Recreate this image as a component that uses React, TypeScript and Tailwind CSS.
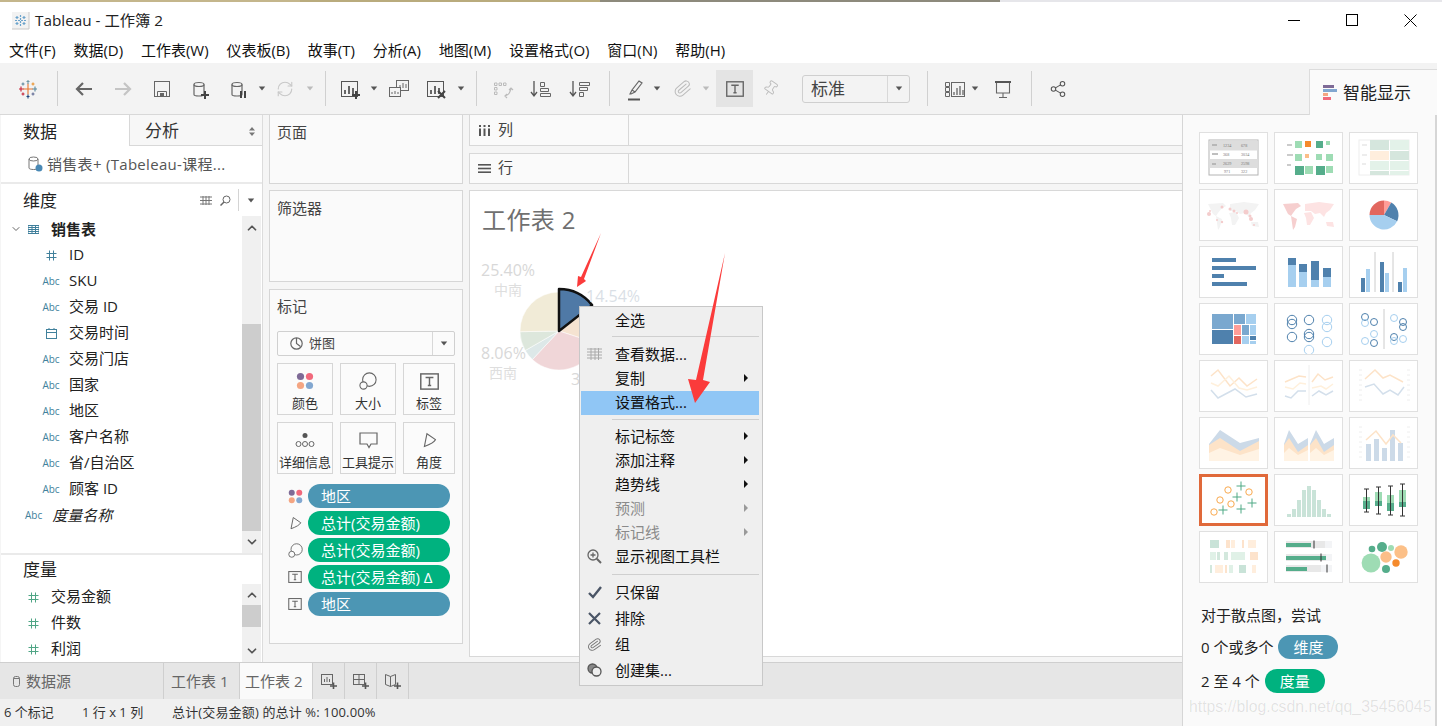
import type { ReactNode } from "react";
import { ChevronDown, ChevronUp, Paperclip, Pin, RefreshCw, Share2 } from "lucide-react";

const BLUE = "#4f81ad";
const SKY = "#a6cfef";
const DARKG = "#55ad8b";
const LIGHTG = "#9edcb4";

// angles run clockwise from 12 o'clock
const wedge = (cx: number, cy: number, r: number, a: number, b: number) => {
  const p = (d: number) => {
    const t = ((d - 90) * Math.PI) / 180;
    return (cx + r * Math.cos(t)).toFixed(2) + " " + (cy + r * Math.sin(t)).toFixed(2);
  };
  return "M" + cx + " " + cy + " L" + p(a) + " A" + r + " " + r + " 0 " + (b - a > 180 ? 1 : 0) + " 1 " + p(b) + " Z";
};

const Cell = ({ children, className = "" }: { children: ReactNode; className?: string }) => (
  <svg width="28" height="28" viewBox="0 0 28 28" fill="none" className={"shrink-0 " + className}>
    {children}
  </svg>
);

const Caret = ({ className = "", color = "#555" }: { className?: string; color?: string }) => (
  <svg width="8" height="5" viewBox="-1 -0.5 10 6" className={"shrink-0 " + className}>
    <path d="M0 0h8L4 5z" fill={color} />
  </svg>
);

const Sep = ({ className }: { className: string }) => <div className={"h-[35px] w-px shrink-0 bg-[#d0d0d0] " + className} />;

const Cyl = ({ x, color = "#666" }: { x: number; color?: string }) => (
  <g stroke={color} strokeWidth="1.2">
    <path d={"M" + x + " 9.5v10c0 2 10 2 10 0v-10"} />
    <ellipse cx={x + 5} cy="9.5" rx="5" ry="2" />
  </g>
);

const Plus = ({ x, y, s = 4 }: { x: number; y: number; s?: number }) => (
  <path d={"M" + (x - s) + " " + y + "h" + s * 2 + "M" + x + " " + (y - s) + "v" + s * 2} stroke="#444" strokeWidth="2" />
);

const TableauLogo = () => (
  <Cell>
    <g strokeWidth="1.1">
      <path d="M14 8.5v11M9 14h10" stroke="#e8762c" />
      <path d="M7 11.5v5M5 14h4.5" stroke="#c72035" />
      <path d="M21 11.5v5M18.5 14h4.5" stroke="#59879b" />
      <path d="M14 5v4M12.5 6.5h3" stroke="#7099a6" />
      <path d="M14 19.5v4M12.5 21.5h3" stroke="#1f457e" />
      <path d="M9 7.5v3M7.5 9h3" stroke="#5b879b" />
      <path d="M19 7.5v3M17.5 9h3" stroke="#eb9129" />
      <path d="M9 17.5v3M7.5 19h3" stroke="#c72035" />
      <path d="M19 17.5v3M17.5 19h3" stroke="#5b6591" />
    </g>
  </Cell>
);

const TitleIcon = () => (
  <svg width="19" height="19" viewBox="0 0 19 19" className="shrink-0">
    <rect x="1" y="1" width="17" height="17" fill="#f2f2f2" />
    <path d="M1 18h17V1" stroke="#c8c8c8" fill="none" />
    <g stroke="#6ba3cc" strokeWidth="1.2">
      <path d="M9.5 4v11M4 9.5h11" strokeDasharray="2 1" />
      <path d="M6 5v3M4.5 6.5h3M13 5v3M11.5 6.5h3M6 11v3M4.5 12.5h3M13 11v3M11.5 12.5h3" />
    </g>
  </svg>
);

const BarsInBox = ({ x = 5 }: { x?: number }) => (
  <g>
    <rect x={x + 0.5} y="6.5" width="16" height="15" stroke="#555" />
    <path d={"M" + (x + 4) + " 19v-4M" + (x + 8) + " 19v-8M" + (x + 12) + " 19v-6"} stroke="#666" strokeWidth="2" />
  </g>
);

const TBox = ({ size = 17 }: { size?: number }) => (
  <svg width={size} height={size - 2} viewBox="0 0 17 15" className="shrink-0">
    <rect x="0.7" y="0.7" width="15.6" height="13.6" fill="none" stroke="#666" strokeWidth="1.3" />
    <path d="M5 4h7M8.5 4v7M7 11h3" stroke="#666" strokeWidth="1.3" fill="none" />
  </svg>
);

const Dots = ({ size = 20 }: { size?: number }) => (
  <svg width={size} height={size} viewBox="0 0 20 20" className="shrink-0">
    <circle cx="5" cy="5" r="4" fill="#7e6a96" />
    <circle cx="15" cy="5" r="4" fill="#f1697c" />
    <circle cx="5" cy="15" r="4" fill="#f4a582" />
    <circle cx="15" cy="15" r="4" fill="#82a7d0" />
  </svg>
);

const SizeIc = ({ size = 20 }: { size?: number }) => (
  <svg width={size} height={size} viewBox="0 0 20 20" fill="none" stroke="#666" strokeWidth="1.2" className="shrink-0">
    <circle cx="11.5" cy="8.5" r="7.5" fill="#fbfbfb" />
    <circle cx="5" cy="15" r="4" fill="#fbfbfb" />
  </svg>
);

const AngleIc = ({ size = 20 }: { size?: number }) => (
  <svg width={size} height={size} viewBox="0 0 20 20" fill="none" stroke="#666" strokeWidth="1.3" className="shrink-0">
    <path d="M7 2 L17 9 Q15 13 4 17 Z" />
  </svg>
);

const Hash = ({ color }: { color: string }) => (
  <svg width="11" height="11" viewBox="0 0 11 11" stroke={color} strokeWidth="1" className="shrink-0">
    <path d="M3.5 0.5v10M7.5 0.5v10M0.5 3.5h10M0.5 7.5h10" />
  </svg>
);

const Abc = () => <span className="text-[10px] leading-none text-[#41819c]">Abc</span>;

const Field = ({ name, kind = "abc" }: { name: string; kind?: "abc" | "num" | "date" }) => (
  <div className="flex h-[26px] items-center">
    <div className="ml-[42px] flex w-[16px] shrink-0 justify-center">
      {kind === "abc" && <Abc />}
      {kind === "num" && <Hash color="#41819c" />}
      {kind === "date" && (
        <svg width="11" height="11" viewBox="0 0 11 11" fill="none" stroke="#41819c">
          <rect x="0.5" y="1.5" width="10" height="9" />
          <path d="M0.5 4.5h10M3 0v2M8 0v2" />
        </svg>
      )}
    </div>
    <span className="ml-[10px] pb-[2px] text-[15px] text-[#222]">{name}</span>
  </div>
);

const Measure = ({ name }: { name: string }) => (
  <div className="flex h-[26px] items-center pl-[27px]">
    <Hash color="#4fa585" />
    <span className="ml-[12px] pb-[2px] text-[15px] text-[#222]">{name}</span>
  </div>
);

const ScrollBtn = ({ up, className }: { up?: boolean; className: string }) => (
  <div className={"flex items-center justify-center bg-[#f0f0f0] " + className}>
    {up ? <ChevronUp size={14} strokeWidth={3} color="#555" /> : <ChevronDown size={14} strokeWidth={3} color="#555" />}
  </div>
);

const Shelf = ({ icon, label }: { icon: ReactNode; label: string }) => (
  <div className="flex h-[31px] border-y border-l border-[#d8d8d8] bg-[#fafafa] first:border-t-0">
    <div className="flex w-[159px] items-center border-r border-[#d8d8d8] pl-[8px]">
      {icon}
      <span className="ml-[7px] pb-[2px] text-[15px] text-[#444]">{label}</span>
    </div>
  </div>
);

const MarkBtn = ({ icon, label }: { icon: ReactNode; label: string }) => (
  <div className="flex h-[52px] flex-col items-center border border-[#d6d6d6] bg-[#fbfbfb] pt-[6px]">
    <div className="flex h-[22px] items-center">{icon}</div>
    <span className="mt-[1px] whitespace-nowrap text-[13px] leading-[20px] text-[#333]">{label}</span>
  </div>
);

const Pill = ({ icon, label, green }: { icon: ReactNode; label: string; green?: boolean }) => (
  <div className="flex h-[24px] items-center">
    <div className="flex w-[31px] shrink-0 justify-center pl-[5px]">{icon}</div>
    <div className={"flex h-[24px] w-[142px] items-center whitespace-pre rounded-full pl-[13px] text-[15px] text-white " + (green ? "bg-[#00b27f]" : "bg-[#4c96b4]")}>{label}</div>
  </div>
);

const thumbs: ReactNode[] = [
  <g key="text">
    <rect x="10" y="8" width="49" height="35" fill="#fff" stroke="#b4b4b4" />
    <rect x="10.5" y="8.5" width="48" height="10" fill="#ddd" />
    <rect x="10.5" y="27" width="48" height="9" fill="#ddd" />
    <path d="M13 13h5M13 22h6M13 32h4" stroke="#aaa" strokeWidth="1.5" />
    <g fontSize="4.2" fill="#777" fontFamily="Liberation Serif, serif">
      <text x="24" y="15">1234</text><text x="42" y="15">678</text>
      <text x="24" y="24">368</text><text x="42" y="24">3034</text>
      <text x="24" y="33">2629</text><text x="42" y="33">2598</text>
      <text x="25" y="41">971</text><text x="42" y="41">322</text>
    </g>
  </g>,
  <g key="heat">
    <path d="M13 13h5M13 23h6M13 33h4" stroke="#bbb" strokeWidth="1.5" />
    {[[21, 9, 7, LIGHTG], [31, 9, 6, "#f58a2c"], [42, 9, 7, DARKG], [52, 9, 4, LIGHTG], [21, 22, 7, LIGHTG], [31, 22, 4, "#fbbe88"], [42, 22, 6, LIGHTG], [52, 22, 7, LIGHTG], [21, 34, 9, DARKG], [31, 34, 8, LIGHTG], [42, 34, 9, DARKG], [52, 34, 7, LIGHTG]].map(([x, y, s, c], i) => (
      <rect key={i} x={x as number} y={y as number} width={s as number} height={s as number} fill={c as string} />
    ))}
  </g>,
  <g key="hilite">
    <rect x="10" y="8" width="50" height="35" fill="#fff" stroke="#eee" />
    {[[21, 8, 19, 10, "#d5e6dd"], [41, 8, 19, 10, "#e3f2e9"], [21, 19, 19, 9, "#ffeedd"], [41, 19, 19, 9, "#d5e6dd"], [21, 29, 19, 9, "#e3f2e9"], [41, 29, 19, 9, "#e3f2e9"], [21, 39, 19, 4, "#d5e6dd"], [41, 39, 19, 4, "#e3f2e9"]].map(([x, y, w, h, c], i) => (
      <rect key={i} x={x as number} y={y as number} width={w as number} height={h as number} fill={c as string} />
    ))}
    <path d="M13 13h5M13 23h5M13 32h4" stroke="#e8e8e8" strokeWidth="1.5" />
  </g>,
  <g key="symbol">
    <path d="M9 15L24 14 27 17 22 20 19 24 17 27 14 25 11 19ZM17 27L23 30 21 38 19 41 18 34ZM30 24L37 23 40 29 36 36 33 36 32 29ZM31 15L45 13 60 15 56 21 52 24 50 28 46 24 41 25 37 22 31 22ZM52 33L59 33 60 38 53 37Z" fill="#f3f3f3" />
    {[[10, 25, 2], [11, 22, 1], [18, 31, 1], [23, 33, 1.2], [23, 18, 1.5], [31, 20, 1.5], [35, 22, 1.5], [38, 24, 1], [47, 23, 2.5], [51, 27, 1.5], [52, 30, 2], [55, 36, 1]].map(([x, y, r], i) => (
      <circle key={i} cx={x} cy={y} r={r} fill="#f4cccc" />
    ))}
  </g>,
  <g key="filled">
    <path d="M9 15L24 14 27 17 22 20 19 24 17 27 14 25 11 19ZM17 27L23 30 21 38 19 41 18 34Z" fill="#f6cfcf" />
    <path d="M30 24L37 23 40 29 36 36 33 36 32 29ZM31 15L45 13 60 15 56 21 52 24 50 28 46 24 41 25 37 22 31 22ZM52 33L59 33 60 38 53 37Z" fill="#fde3e3" />
  </g>,
  <g key="pie">
    <path d={wedge(35, 26, 14.5, 0, 30)} fill="#ff9d98" />
    <path d={wedge(35, 26, 14.5, 30, 115)} fill={BLUE} />
    <path d={wedge(35, 26, 14.5, 115, 270)} fill={SKY} />
    <path d={wedge(35, 26, 14.5, 270, 360)} fill="#e2675f" />
  </g>,
  <g key="hbar" fill={BLUE}>
    <rect x="13" y="12" width="24" height="4" />
    <rect x="13" y="20" width="44" height="4" />
    <rect x="13" y="28" width="12" height="4" />
    <rect x="13" y="36" width="35" height="4" />
  </g>,
  <g key="stack">
    {[[14, 12, 19], [25, 18, 26], [37, 15, 34], [49, 22, 31]].map(([x, a, b], i) => (
      <g key={i}>
        <rect x={x} y={a} width="8" height={b - a} fill={BLUE} />
        <rect x={x} y={b} width="8" height={41 - b} fill={SKY} />
      </g>
    ))}
  </g>,
  <g key="side">
    <path d="M26 6v40M44 6v40" stroke="#ccc" />
    {[[12, 32, BLUE], [17, 23, SKY], [31, 16, BLUE], [36, 27, SKY], [49, 36, BLUE], [54, 22, SKY]].map(([x, y, c], i) => (
      <rect key={i} x={x as number} y={y as number} width="4" height={46 - (y as number)} fill={c as string} />
    ))}
  </g>,
  <g key="tree">
    {[[13, 11, 21, 15, "#7aa8cf"], [13, 27, 21, 14, BLUE], [35, 11, 11, 10, "#7aa8cf"], [47, 11, 10, 10, SKY], [35, 22, 7, 10, "#ff9d98"], [43, 22, 7, 10, "#7aa8cf"], [51, 22, 6, 10, SKY], [35, 33, 7, 8, "#e2675f"], [43, 33, 7, 8, SKY], [51, 33, 6, 4, BLUE], [51, 38, 6, 3, SKY]].map(([x, y, w, h, c], i) => (
      <rect key={i} x={x as number} y={y as number} width={w as number} height={h as number} fill={c as string} />
    ))}
  </g>,
  <g key="circles" fill="none" strokeWidth="1">
    {[[18, 17, BLUE], [18, 21, BLUE], [18, 34, BLUE], [35, 17, BLUE], [35, 31, BLUE], [35, 34, BLUE], [35, 47, SKY], [53, 17, SKY], [53, 24, SKY], [53, 39, SKY]].map(([x, y, c], i) => (
      <circle key={i} cx={x} cy={y} r="4.7" stroke={c as string} />
    ))}
  </g>,
  <g key="sidecircles" fill="none" strokeWidth="1">
    <path d="M35 6v40" stroke="#ccc" />
    {[[16, 14, BLUE], [16, 20, SKY], [25, 19, BLUE], [25, 31, SKY], [16, 38, SKY], [25, 40, BLUE], [45, 15, SKY], [54, 19, BLUE], [54, 24, BLUE], [45, 34, BLUE], [45, 38, SKY], [54, 36, SKY]].map(([x, y, c], i) => (
      <circle key={i} cx={x} cy={y} r="3.5" stroke={c as string} />
    ))}
  </g>,
  <g key="lines" fill="none">
    <polyline points="12,16 19,10 31,26 40,18 48,26 58,19" stroke="#fde3c8" strokeWidth="1.5" />
    <polyline points="12,23 19,26 30,16 40,28 48,30 58,27" stroke="#fff0dc" strokeWidth="1.5" />
    <polyline points="12,30 19,38 36,29 47,37 58,34" stroke="#d3dfeb" strokeWidth="1.5" />
  </g>,
  <g key="lines2" fill="none" strokeWidth="1.5">
    <path d="M35 5v40" stroke="#eee" strokeWidth="1" />
    <polyline points="11,22 25,16 32,17" stroke="#fde3c8" />
    <polyline points="11,27 19,29 26,23 32,24" stroke="#fff0dc" />
    <polyline points="11,36 17,38 24,31 32,31" stroke="#d3dfeb" />
    <polyline points="38,22 44,14 51,20 59,17" stroke="#fde3c8" />
    <polyline points="38,28 47,26 52,29 59,24" stroke="#fff0dc" />
    <polyline points="38,36 45,31 52,35 59,31" stroke="#d3dfeb" />
  </g>,
  <g key="dual" fill="none" strokeWidth="1.5">
    <path d="M10 10h3M10 15h3M10 20h3M10 25h3M10 30h3M10 35h3M10 40h3M58 10h3M58 15h3M58 20h3M58 25h3M58 30h3M58 35h3M58 40h3" stroke="#eee" strokeWidth="1" />
    <polyline points="16,19 26,10 34,18 41,15 54,22" stroke="#fde3c8" />
    <polyline points="16,27 25,24 34,34 41,30 49,35 55,27" stroke="#d3dfeb" />
  </g>,
  <g key="area">
    <polygon points="10,27 21,13 41,26 60,21 60,44 10,44" fill="#ccdae8" />
    <polygon points="10,28 21,21 41,34 60,24 60,44 10,44" fill="#fde3c8" />
    <polygon points="10,36 21,31 41,38 60,32 60,44 10,44" fill="#fff3e4" />
  </g>,
  <g key="area2">
    <polygon points="10,27 15,13 24,27 34,21 34,44 10,44" fill="#ccdae8" />
    <polygon points="10,28 15,21 24,35 34,28 34,44 10,44" fill="#fde3c8" />
    <polygon points="10,36 15,31 24,38 34,33 34,44 10,44" fill="#fff3e4" />
    <polygon points="36,27 42,13 50,27 60,21 60,44 36,44" fill="#ccdae8" />
    <polygon points="36,28 42,21 50,35 60,28 60,44 36,44" fill="#fde3c8" />
    <polygon points="36,36 42,31 50,38 60,33 60,44 36,44" fill="#fff3e4" />
  </g>,
  <g key="combo">
    <path d="M10 10h3M10 15h3M10 20h3M10 25h3M10 30h3M10 35h3M10 40h3M58 10h3M58 15h3M58 20h3M58 25h3M58 30h3M58 35h3M58 40h3" stroke="#eee" />
    {[[17, 27], [25, 22], [33, 31], [41, 13], [49, 26]].map(([x, y], i) => (
      <rect key={i} x={x} y={y} width="5" height={44 - y} fill="#ccdae8" />
    ))}
    <polyline points="17,23 27,14 37,27 44,18 52,26" fill="none" stroke="#fde3c8" strokeWidth="1.5" />
  </g>,
  <g key="scatter" fill="none" strokeWidth="1">
    {[[29, 16], [50, 18], [21, 26], [32, 30], [15, 38]].map(([x, y], i) => (
      <circle key={i} cx={x} cy={y} r="3.2" stroke="#f9a94f" />
    ))}
    {[[42, 12], [38, 23], [53, 29], [24, 36], [42, 35]].map(([x, y], i) => (
      <path key={i} d={"M" + (x - 4.5) + " " + y + "h9M" + x + " " + (y - 4.5) + "v9"} stroke="#4fa985" />
    ))}
  </g>,
  <g key="hist" fill="#c9e3d8">
    {[[13, 40], [18, 35], [23, 26], [28, 16], [33, 12], [38, 16], [43, 26], [48, 35], [53, 40]].map(([x, y], i) => (
      <rect key={i} x={x} y={y} width="4" height={43 - y} />
    ))}
  </g>,
  <g key="box">
    {[[14, 15, 38, 23, 27, 35], [26, 13, 40, 18, 27, 32], [38, 12, 41, 21, 29, 37], [50, 10, 42, 16, 28, 33]].map(([x, t, b, y1, y2, y3], i) => (
      <g key={i}>
        <rect x={x} y={y1} width="7" height={y2 - y1} fill={LIGHTG} />
        <rect x={x} y={y2} width="7" height={y3 - y2} fill={DARKG} />
        <path d={"M" + (x + 3.5) + " " + t + "V" + b + "M" + (x + 1) + " " + t + "h5M" + (x + 1) + " " + b + "h5"} stroke="#333" fill="none" />
      </g>
    ))}
  </g>,
  <g key="gantt">
    {[[11, 9, 9, "#c9e3d8"], [27, 9, 4, "#fde3cc"], [32, 9, 4, "#ffeedd"], [43, 9, 2, "#fde3cc"], [49, 9, 8, "#ffeedd"], [11, 21, 6, "#e0f1e7"], [18, 21, 3, "#d3e8dd"], [25, 21, 4, "#d3e8dd"], [32, 21, 14, "#e0f1e7"], [51, 21, 8, "#fde3cc"], [11, 34, 2, "#d3e8dd"], [16, 34, 8, "#ffeedd"], [26, 34, 2, "#fde3cc"], [30, 34, 4, "#e0f1e7"], [40, 34, 7, "#c9e3d8"], [53, 34, 4, "#ffeedd"]].map(([x, y, w, c], i) => (
      <rect key={i} x={x as number} y={y as number} width={w as number} height="8" fill={c as string} />
    ))}
  </g>,
  <g key="bullet">
    {[[10, 25, 37, 40], [23, 26, 52, 47], [34, 21, 33, 53]].map(([y, w, g, t], i) => (
      <g key={i}>
        <rect x="12" y={y} width="46" height="7" fill="#f3f4f6" />
        <rect x="12" y={y} width={w + 14} height="7" fill="#e8e8e8" />
        <rect x="12" y={y + 2} width={g - 12} height="4" fill={DARKG} />
        <path d={"M" + t + " " + (y - 0.5) + "v8"} stroke="#333" />
      </g>
    ))}
  </g>,
  <g key="bubble">
    <circle cx="22" cy="32" r="9.4" fill={LIGHTG} />
    <circle cx="37" cy="26" r="5.7" fill="#fbbe88" />
    <circle cx="52" cy="21" r="6.7" fill="#fcc088" />
    <circle cx="47" cy="32" r="3.7" fill="#f58a2c" />
    <circle cx="37" cy="38" r="4" fill={DARKG} />
    <circle cx="33" cy="16" r="5" fill={DARKG} />
    <circle cx="23" cy="18" r="3.3" fill={DARKG} />
    <circle cx="42" cy="17" r="3" fill={LIGHTG} />
  </g>,
];

const SELECTED = 18;

type MenuRow = { label?: string; h?: string; arrow?: boolean; off?: boolean; active?: boolean; icon?: ReactNode; sep?: string };

const menuRows: MenuRow[] = [
  { label: "全选", h: "h-[26px]" },
  { sep: "mt-[2px] mb-[6px]" },
  {
    label: "查看数据...",
    h: "h-[24px]",
    icon: (
      <svg width="15" height="12" viewBox="0 0 15 12" stroke="#aaa">
        <path d="M0 1h15M0 4h15M0 7h15M0 10h15M4 0v12M8 0v12M11.5 0v12" />
      </svg>
    ),
  },
  { label: "复制", h: "h-[24px]", arrow: true },
  { label: "设置格式...", h: "h-[24px]", active: true },
  { sep: "mt-[4px] mb-[5px]" },
  { label: "标记标签", h: "h-[24px]", arrow: true },
  { label: "添加注释", h: "h-[24px]", arrow: true },
  { label: "趋势线", h: "h-[24px]", arrow: true },
  { label: "预测", h: "h-[24px]", arrow: true, off: true },
  { label: "标记线", h: "h-[24px]", arrow: true, off: true },
  {
    label: "显示视图工具栏",
    h: "h-[24px]",
    icon: (
      <svg width="15" height="15" viewBox="0 0 15 15" fill="none" stroke="#666" strokeWidth="1.3">
        <circle cx="6" cy="6" r="5" />
        <path d="M3.5 6h5M6 3.5v5" />
        <path d="M9.8 9.8L14 14" strokeWidth="2" />
      </svg>
    ),
  },
  { sep: "mt-[5px] mb-[5px]" },
  {
    label: "只保留",
    h: "h-[26px]",
    icon: (
      <svg width="14" height="13" viewBox="0 0 14 13" fill="none" stroke="#4a5566" strokeWidth="2.4">
        <path d="M1 7l4 4 8-10" />
      </svg>
    ),
  },
  {
    label: "排除",
    h: "h-[26px]",
    icon: (
      <svg width="13" height="13" viewBox="0 0 13 13" fill="none" stroke="#4a5566" strokeWidth="2.2">
        <path d="M1 1l11 11M12 1L1 12" />
      </svg>
    ),
  },
  { label: "组", h: "h-[26px]", icon: <Paperclip size={15} strokeWidth={1.5} color="#777" className="rotate-[10deg]" /> },
  {
    label: "创建集...",
    h: "h-[26px]",
    icon: (
      <svg width="15" height="14" viewBox="0 0 15 14" fill="none" stroke="#555" strokeWidth="1.3">
        <circle cx="5.5" cy="5.5" r="4.5" fill="#888" />
        <circle cx="9.5" cy="8.5" r="4.5" fill="#efefef" />
      </svg>
    ),
  },
];

const ContextMenu = () => (
  <div className="absolute left-[579px] top-[306px] w-[184px] border border-[#c8c8c8] bg-[#efefef] py-px pl-px pr-[3px] text-[15px] text-[#111]">
    {menuRows.map((r, i) =>
      r.label ? (
        <div key={i} className={"relative flex items-center pb-[2px] pl-[34px] " + r.h + (r.active ? " bg-[#90c6f5]" : "") + (r.off ? " text-[#8a8a8a]" : "")}>
          {r.icon && <div className="absolute left-[5px] flex w-[17px] justify-center">{r.icon}</div>}
          {r.label}
          {r.arrow && (
            <svg width="4" height="8" viewBox="0 0 4 8" className="absolute right-[11px]">
              <path d="M0 0l4 4-4 4z" fill={r.off ? "#999" : "#111"} />
            </svg>
          )}
        </div>
      ) : (
        <div key={i} className={"ml-[31px] h-px bg-[#cfcfcf] " + r.sep} />
      )
    )}
  </div>
);

export default function App() {
  return (
    <div className="relative h-[726px] w-[1442px] overflow-hidden bg-white font-['Open_Sans','Noto_Sans_CJK_SC',sans-serif]">
      {/* scrap of desktop above the window */}
      <div className="flex h-[2px]">
        <div className="w-[300px] bg-[#c4b68c]" />
        <div className="w-[300px] bg-[#b9ab7d]" />
        <div className="w-[400px] bg-[#8d8a7c]" />
        <div className="flex-1 bg-[#e6e6ea]" />
      </div>

      <div className="flex h-[36px] items-center pl-[11px]">
        <TitleIcon />
        <span className="ml-[5px] text-[15.3px] text-[#222]">Tableau - 工作簿 2</span>
        <div className="ml-auto flex items-center pr-[25px]">
          <div className="h-px w-[12px] bg-black" />
          <div className="ml-[46px] h-[12px] w-[12px] border border-black" />
          <svg width="13" height="13" viewBox="0 0 13 13" className="ml-[46px]" stroke="black">
            <path d="M0.5 0.5l12 12M12.5 0.5l-12 12" />
          </svg>
        </div>
      </div>

      <div className="flex h-[25px] items-center gap-[17.8px] pl-[9px] text-[15px] text-[#111]">
        {["文件(F)", "数据(D)", "工作表(W)", "仪表板(B)", "故事(T)", "分析(A)", "地图(M)", "设置格式(O)", "窗口(N)", "帮助(H)"].map((m) => (
          <span key={m}>{m}</span>
        ))}
      </div>

      {/* toolbar */}
      <div className="flex h-[52px] w-[1437px] items-center border-b border-[#d8d8d8] bg-[#f3f3f3] pl-[14px]">
        <TableauLogo />
        <Sep className="ml-[15px]" />
        <Cell className="ml-[12px]"><path d="M22 14H7M13 8l-6 6 6 6" stroke="#666" strokeWidth="2.2" /></Cell>
        <Cell className="ml-[11px]"><path d="M6 14h15M15 8l6 6-6 6" stroke="#c4c4c4" strokeWidth="2.2" /></Cell>
        <Cell className="ml-[11px]">
          <rect x="6.5" y="6.5" width="15" height="15" stroke="#666" />
          <path d="M9.5 21.5v-5h9v5" stroke="#666" />
          <rect x="12" y="18" width="4" height="3" fill="#666" />
        </Cell>
        <Cell className="ml-[11px]"><Cyl x={7} /><Plus x={18} y={20} /></Cell>
        <Cell className="ml-[9px]"><Cyl x={8} /><path d="M17 16v7M21 16v7" stroke="#444" strokeWidth="2" /></Cell>
        <Caret className="ml-[6px]" />
        <div className="ml-[5px] flex w-[28px] justify-center"><RefreshCw size={18} strokeWidth={1.5} color="#c8c8c8" /></div>
        <Caret className="ml-[7px]" color="#bbb" />
        <Sep className="ml-[11px]" />
        <Cell className="ml-[10px]"><BarsInBox /><Plus x={20} y={20} /></Cell>
        <Caret className="ml-[6px]" />
        <Cell className="ml-[7px]">
          <rect x="11.5" y="5.5" width="12" height="10" stroke="#666" />
          <path d="M15 13v-3M18 13v-5M21 13v-4" stroke="#666" />
          <rect x="4.5" y="12.5" width="11" height="9" fill="#f3f3f3" stroke="#666" />
          <path d="M7 19v-2M10 19v-3M13 19v-2" stroke="#666" />
        </Cell>
        <Cell className="ml-[9px]">
          <BarsInBox />
          <path d="M16 16l7 7M23 16l-7 7" stroke="#444" strokeWidth="2" />
        </Cell>
        <Caret className="ml-[7px]" />
        <Sep className="ml-[11px]" />
        <Cell className="ml-[11px]">
          <path d="M6.5 8h2.5v2.5h-2.5zM11 8h2.5v2.5h-2.5zM15.5 8h2.5v2.5h-2.5zM6.5 12.5h2.5v2.5h-2.5zM6.5 17h2.5v2.5h-2.5z" stroke="#bbb" />
          <path d="M17 21Q22 20 23 13M21 15l2-2 2 2M19 19l-2 2 2 2" stroke="#bbb" strokeWidth="1.2" />
        </Cell>
        <Cell className="ml-[11px]">
          <path d="M7 6v14M4 17l3 4 3-4" stroke="#555" strokeWidth="1.3" />
          <path d="M13.5 7.5h4v4h-4zM13.5 13.5h8v3h-8zM13.5 18.5h10v3h-10z" stroke="#666" />
        </Cell>
        <Cell className="ml-[11px]">
          <path d="M7 6v14M4 17l3 4 3-4" stroke="#555" strokeWidth="1.3" />
          <path d="M13.5 7.5h10v3h-10zM13.5 12.5h8v3h-8zM13.5 17.5h4v4h-4z" stroke="#666" />
        </Cell>
        <Sep className="ml-[15px]" />
        <Cell className="ml-[12px]">
          <path d="M8 19l2-4 7-9 3 2-7 9-4 2zM10 15l3 2" stroke="#666" strokeWidth="1.2" />
          <path d="M6 24.5h12" stroke="#555" strokeWidth="2" />
        </Cell>
        <Caret className="ml-[3px]" />
        <div className="ml-[7px] flex w-[28px] justify-center"><Paperclip size={19} strokeWidth={1.3} color="#bbb" className="rotate-[5deg]" /></div>
        <Caret className="ml-[6px]" color="#bbb" />
        <div className="ml-[6px] flex h-[37px] w-[37px] items-center justify-center bg-[#e4e4e4]"><TBox size={18} /></div>
        <div className="ml-[3px] flex w-[28px] justify-center"><Pin size={17} strokeWidth={1.3} color="#bbb" className="rotate-[35deg]" /></div>
        <div className="ml-[18px] flex h-[28px] w-[108px] items-center rounded-[3px] border border-[#cfcfcf] bg-[#f3f3f3]">
          <span className="flex-1 pl-[8px] text-[17px] text-[#444]">标准</span>
          <div className="flex h-full w-[22px] items-center justify-center border-l border-[#d8d8d8]"><Caret /></div>
        </div>
        <Sep className="ml-[17px]" />
        <Cell className="ml-[13px]">
          <path d="M4.5 7.5h4v4h-4zM4.5 12.5h4v4h-4zM4.5 17.5h4v4h-4z" stroke="#666" />
          <rect x="10.5" y="7.5" width="13" height="14" stroke="#666" />
          <path d="M13 20v-3M16 20v-7M19 20v-9M22 20v-5" stroke="#666" strokeWidth="1.3" />
        </Cell>
        <Caret className="ml-[2px]" />
        <Cell className="ml-[10px]">
          <path d="M6 7h16" stroke="#555" strokeWidth="2" />
          <path d="M7.5 8v10h13V8M14 18v4.5M10 22.5h8" stroke="#666" strokeWidth="1.1" />
        </Cell>
        <Sep className="ml-[14px]" />
        <div className="ml-[12px] flex w-[28px] justify-center"><Share2 size={18} strokeWidth={1.4} color="#555" /></div>
        <div className="-mb-px ml-auto flex h-[46px] w-[128px] items-center self-end border-l border-t border-[#dcdcdc] bg-[#fafafa] pl-[13px]">
          <svg width="14" height="16" viewBox="0 0 14 16" className="shrink-0">
            <rect width="11" height="3" fill="#7e6a96" />
            <rect y="4" width="14" height="3" fill="#82a7d0" />
            <rect y="8" width="5" height="3" fill="#f4a582" />
            <rect y="12" width="8" height="3" fill="#f1697c" />
          </svg>
          <span className="ml-[6px] text-[17px] text-[#222]">智能显示</span>
        </div>
      </div>

      <div className="flex h-[611px] w-[1437px]">
        <div className="flex w-[1182px] flex-col">
          <div className="flex h-[547px] bg-[#f5f5f5] pl-px">
            {/* data pane */}
            <div className="flex w-[262px] shrink-0 flex-col border-r border-[#dcdcdc] bg-white">
              <div className="flex h-[31px] shrink-0">
                <div className="flex w-[128px] items-center pl-[22px] pt-[2px] text-[17px] text-[#222]">数据</div>
                <div className="relative flex flex-1 items-center border-b border-l border-[#d8d8d8] bg-[#f7f7f7] pl-[15px] pt-[2px] text-[17px] text-[#333]">
                  分析
                  <svg width="6" height="9" viewBox="0 0 6 9" className="absolute right-[7px]">
                    <path d="M0 3.5L3 0l3 3.5zM0 5.5L3 9l3-3.5z" fill="#777" />
                  </svg>
                </div>
              </div>
              <div className="flex h-[38px] shrink-0 items-center border-b-2 border-[#eaeaea] pl-[27px]">
                <svg width="15" height="16" viewBox="0 0 15 16" className="shrink-0" fill="none" stroke="#777">
                  <path d="M1 3v9c0 2 9 2 9 0V3" />
                  <ellipse cx="5.5" cy="3" rx="4.5" ry="2" />
                  <circle cx="11" cy="12" r="3.5" fill="#4a89b5" stroke="none" />
                </svg>
                <span className="ml-[4px] whitespace-nowrap text-[15px] tracking-[0.3px] text-[#555]">销售表+ (Tabeleau-课程...</span>
              </div>
              <div className="flex h-[32px] shrink-0 items-center pl-[22px]">
                <span className="pt-[2px] text-[17px] text-[#222]">维度</span>
                <svg width="12" height="9" viewBox="0 0 12 9" className="ml-auto" stroke="#777">
                  <path d="M0 1h12M0 4.5h12M0 8h12M3 0v9M6 0v9M9 0v9" />
                </svg>
                <svg width="11" height="11" viewBox="0 0 11 11" className="ml-[8px]" fill="none" stroke="#666">
                  <circle cx="6.5" cy="4.5" r="3.5" />
                  <path d="M4 7l-3.5 3.5" strokeWidth="1.5" />
                </svg>
                <div className="ml-[7px] h-[22px] w-px bg-[#d4d4d4]" />
                <Caret className="ml-[8px] mr-[7px]" />
              </div>
              <div className="flex h-[337px] shrink-0 pr-px">
                <div className="flex-1 overflow-hidden">
                  <div className="flex h-[26px] items-center pl-[9px]">
                    <ChevronDown size={12} strokeWidth={2} color="#666" />
                    <svg width="11" height="9" viewBox="0 0 11 9" className="ml-[6px]" stroke="#3f7f9b">
                      <path d="M0 0.5h11M0 4.5h11M0 8.5h11M0 0v9M11 0v9M4 0v9M7.5 0v9M0 2.5h11M0 6.5h11" />
                    </svg>
                    <span className="ml-[12px] text-[15px] font-bold text-[#222]">销售表</span>
                  </div>
                  <Field name="ID" kind="num" />
                  <Field name="SKU" />
                  <Field name="交易 ID" />
                  <Field name="交易时间" kind="date" />
                  <Field name="交易门店" />
                  <Field name="国家" />
                  <Field name="地区" />
                  <Field name="客户名称" />
                  <Field name="省/自治区" />
                  <Field name="顾客 ID" />
                  <div className="flex h-[26px] items-center pl-[24px]">
                    <Abc />
                    <span className="ml-[10px] text-[15px] italic text-[#222]">度量名称</span>
                  </div>
                </div>
                <div className="flex w-[19px] shrink-0 flex-col bg-[#f0f0f0]">
                  <ScrollBtn up className="h-[24px]" />
                  <div className="h-[84px]" />
                  <div className="h-[207px] bg-[#cdcdcd]" />
                  <ScrollBtn className="flex-1" />
                </div>
              </div>
              <div className="flex h-[31px] shrink-0 items-center border-t-2 border-[#eaeaea] pl-[22px] text-[17px] text-[#222]">度量</div>
              <div className="flex min-h-0 flex-1 pr-px">
                <div className="flex-1 overflow-hidden">
                  <Measure name="交易金额" />
                  <Measure name="件数" />
                  <Measure name="利润" />
                </div>
                <div className="flex w-[19px] shrink-0 flex-col bg-[#f0f0f0]">
                  <ScrollBtn up className="h-[21px]" />
                  <div className="h-[22px] bg-[#cdcdcd]" />
                  <ScrollBtn className="flex-1 pt-[13px]" />
                </div>
              </div>
            </div>

            {/* pages, filters, marks */}
            <div className="ml-[6px] flex w-[194px] shrink-0 flex-col">
              <div className="h-[69px] border-x border-b border-[#d6d6d6] bg-[#fafafa] pl-[7px] pt-[6px] text-[15px] text-[#444]">页面</div>
              <div className="mt-[6px] h-[92px] border border-[#d6d6d6] bg-[#fafafa] pl-[7px] pt-[6px] text-[15px] text-[#444]">筛选器</div>
              <div className="mt-[7px] h-[355px] border border-[#d6d6d6] bg-[#fafafa] px-[7px] pt-[5px]">
                <div className="text-[15px] leading-[22px] text-[#444]">标记</div>
                <div className="mt-[14px] flex h-[25px] items-center rounded-[2px] border border-[#d0d0d0] bg-[#fbfbfb]">
                  <svg width="13" height="13" viewBox="0 0 13 13" className="ml-[12px]" fill="none" stroke="#666" strokeWidth="1.2">
                    <circle cx="6.5" cy="6.5" r="5.7" />
                    <path d="M6.5 1v5.5l4 3" />
                  </svg>
                  <span className="ml-[6px] flex-1 text-[13px] text-[#444]">饼图</span>
                  <div className="flex h-full w-[22px] items-center justify-center border-l border-[#d8d8d8]"><Caret /></div>
                </div>
                <div className="mt-[7px] grid grid-cols-[56px_56px_52px] gap-x-[7px] gap-y-[7px]">
                  <MarkBtn icon={<Dots size={18} />} label="颜色" />
                  <MarkBtn icon={<SizeIc size={18} />} label="大小" />
                  <MarkBtn icon={<TBox size={19} />} label="标签" />
                  <MarkBtn
                    icon={
                      <svg width="20" height="16" viewBox="0 0 20 16" fill="none" stroke="#666">
                        <circle cx="10" cy="3.5" r="2.5" fill="#555" stroke="none" />
                        <circle cx="3.5" cy="12" r="2.5" />
                        <circle cx="10" cy="12" r="2.5" />
                        <circle cx="16.5" cy="12" r="2.5" />
                      </svg>
                    }
                    label="详细信息"
                  />
                  <MarkBtn
                    icon={
                      <svg width="19" height="17" viewBox="0 0 19 17" fill="none" stroke="#666" strokeWidth="1.2">
                        <path d="M1 1h17v11h-6l-2 3.5L8 12H1z" />
                      </svg>
                    }
                    label="工具提示"
                  />
                  <MarkBtn icon={<AngleIc size={17} />} label="角度" />
                </div>
                <div className="mt-[10px] flex flex-col gap-[3px]">
                  <Pill icon={<Dots size={15} />} label="地区" />
                  <Pill icon={<AngleIc size={15} />} label="总计(交易金额)" green />
                  <Pill icon={<SizeIc size={15} />} label="总计(交易金额)" green />
                  <Pill icon={<TBox size={14} />} label="总计(交易金额) Δ" green />
                  <Pill icon={<TBox size={14} />} label="地区" />
                </div>
              </div>
            </div>

            {/* shelves and view */}
            <div className="ml-[6px] flex flex-1 flex-col">
              <Shelf
                label="列"
                icon={
                  <svg width="13" height="11" viewBox="0 0 13 11" fill="#555">
                    <rect x="1" width="2" height="2" />
                    <rect x="5.5" width="2" height="2" />
                    <rect x="10" width="2" height="2" />
                    <rect x="1" y="3.5" width="2" height="7.5" />
                    <rect x="5.5" y="3.5" width="2" height="7.5" />
                    <rect x="10" y="3.5" width="2" height="7.5" />
                  </svg>
                }
              />
              <div className="mt-[7px]" />
              <Shelf
                label="行"
                icon={
                  <svg width="13" height="9" viewBox="0 0 13 9" fill="#555">
                    <rect width="13" height="1.6" />
                    <rect y="3.7" width="13" height="1.6" />
                    <rect y="7.4" width="13" height="1.6" />
                  </svg>
                }
              />
              <div className="relative mt-[6px] h-[467px] border-y border-l border-[#d8d8d8] bg-white">
                <div className="pl-[12px] pt-[11px] text-[24px] leading-[36px] tracking-[0.4px] text-[#707070]">工作表 2</div>
                {/* chart labels sit at their place on the pie */}
                <svg width="100" height="100" viewBox="0 0 100 100" className="absolute left-[39px] top-[89px]">
                  <path d={wedge(50, 51, 39, 52, 108)} fill="#f5e3d1" stroke="#fff" strokeWidth="0.5" />
                  <path d={wedge(50, 51, 39, 108, 223)} fill="#f0d6d8" stroke="#fff" strokeWidth="0.5" />
                  <path d={wedge(50, 51, 39, 223, 240)} fill="#dde8e8" stroke="#fff" strokeWidth="0.5" />
                  <path d={wedge(50, 51, 39, 240, 269)} fill="#dde7dc" stroke="#fff" strokeWidth="0.5" />
                  <path d={wedge(50, 51, 39, 269, 360)} fill="#f1ebd7" stroke="#fff" strokeWidth="0.5" />
                  <path d={wedge(50, 51, 42, 0, 52)} fill="#4f79a6" stroke="#111" strokeWidth="2.5" strokeLinejoin="round" />
                </svg>
                <span className="absolute left-[11px] top-[67px] text-[16px] text-[#d8d8d8]">25.40%</span>
                <span className="absolute left-[24px] top-[88px] text-[14px] text-[#dedede]">中南</span>
                <span className="absolute left-[116px] top-[93px] text-[16px] text-[#dadfe6]">14.54%</span>
                <span className="absolute left-[11px] top-[150px] text-[16px] text-[#d8d8d8]">8.06%</span>
                <span className="absolute left-[19px] top-[171px] text-[14px] text-[#dedede]">西南</span>
                <span className="absolute left-[101px] top-[176px] text-[16px] text-[#d8d8d8]">3</span>
              </div>
            </div>
          </div>

          <div className="flex h-[37px] border-t border-[#cfcfcf] bg-[#e6e6e6] text-[15px] text-[#666]">
            <div className="flex w-[164px] items-center border-r border-[#cfcfcf] pl-[13px]">
              <svg width="7" height="11" viewBox="0 0 7 11" fill="none" stroke="#777">
                <rect x="0.5" y="0.5" width="6" height="10" rx="2" />
                <path d="M0.5 2.5h6" />
              </svg>
              <span className="ml-[6px]">数据源</span>
            </div>
            <div className="flex w-[75px] items-center pl-[7px]">工作表 1</div>
            <div className="flex w-[74px] items-center border-x border-[#cfcfcf] bg-[#fafafa] pl-[5px]">工作表 2</div>
            <div className="flex w-[32px] items-center justify-center border-r border-[#cfcfcf]">
              <svg width="16" height="16" viewBox="0 0 16 16" fill="none" stroke="#666">
                <rect x="0.5" y="1.5" width="11" height="10" />
                <path d="M3.5 9V6M6 9V4M8.5 9V6" />
                <path d="M9 13h7M12.5 9.5v7" stroke="#555" strokeWidth="1.6" />
              </svg>
            </div>
            <div className="flex w-[32px] items-center justify-center border-r border-[#cfcfcf]">
              <svg width="16" height="16" viewBox="0 0 16 16" fill="none" stroke="#666">
                <rect x="0.5" y="1.5" width="11" height="10" />
                <path d="M0.5 6.5h11M6 1.5v10" />
                <path d="M9 13h7M12.5 9.5v7" stroke="#555" strokeWidth="1.6" />
              </svg>
            </div>
            <div className="flex w-[32px] items-center justify-center border-r border-[#cfcfcf]">
              <svg width="16" height="16" viewBox="0 0 16 16" fill="none" stroke="#666">
                <path d="M0.5 1.5l5 2 5-2v10l-5 2-5-2zM5.5 3.5v10" />
                <path d="M9 13h7M12.5 9.5v7" stroke="#555" strokeWidth="1.6" />
              </svg>
            </div>
          </div>

          <div className="flex h-[27px] items-center bg-[#f0f0f0] pl-[4px] text-[13px] text-[#333]">
            <span className="w-[78px]">6 个标记</span>
            <span className="w-[90px]">1 行 x 1 列</span>
            <span className="tracking-[0.15px]">总计(交易金额) 的总计 %: 100.00%</span>
          </div>
        </div>

        {/* show me */}
        <div className="flex-1 border-l border-r-2 border-[#d6d6d6] bg-[#fafafa] pl-[16px] pt-[17px]">
          <div className="grid grid-cols-[69px_69px_69px] gap-x-[6px] gap-y-[5px]">
            {thumbs.map((t, i) => (
              <div key={i} className={"h-[52px] w-[69px] bg-white " + (i === SELECTED ? "border-[3px] border-[#e0693a]" : "border border-[#e0e0e0]")}>
                <svg width="100%" height="100%" viewBox={i === SELECTED ? "3 3 63 46" : "1 1 67 50"} className="block">
                  {t}
                </svg>
              </div>
            ))}
          </div>
          <div className="mt-[22px] pl-[2px] text-[15px] text-[#222]">
            <div className="leading-[20px]">对于散点图，尝试</div>
            <div className="mt-[10px] flex h-[24px] items-center">
              0 个或多个
              <span className="ml-[5px] flex h-[24px] w-[60px] items-center justify-center rounded-full bg-[#4c96b4] text-white">维度</span>
            </div>
            <div className="mt-[10px] flex h-[24px] items-center">
              2 至 4 个
              <span className="ml-[5px] flex h-[24px] w-[60px] items-center justify-center rounded-full bg-[#00b27f] text-white">度量</span>
            </div>
          </div>
        </div>
      </div>

      <ContextMenu />

      {/* red annotation arrows drawn over the screenshot */}
      <svg width="1442" height="726" viewBox="0 0 1442 726" className="pointer-events-none absolute left-0 top-0">
        <polygon points="601,233 584,279 586,281 577,287 578,276 581,277" fill="#fb3b3b" />
        <polygon points="725,253 703,380 710,382 695,403 688,379 696,380" fill="#fb3b3b" />
      </svg>

      <div className="pointer-events-none absolute left-[1189px] top-[695px] font-['Liberation_Sans',sans-serif] text-[15.8px] text-[#000000]/10">
        https://blog.csdn.net/qq_35456045
      </div>
    </div>
  );
}
